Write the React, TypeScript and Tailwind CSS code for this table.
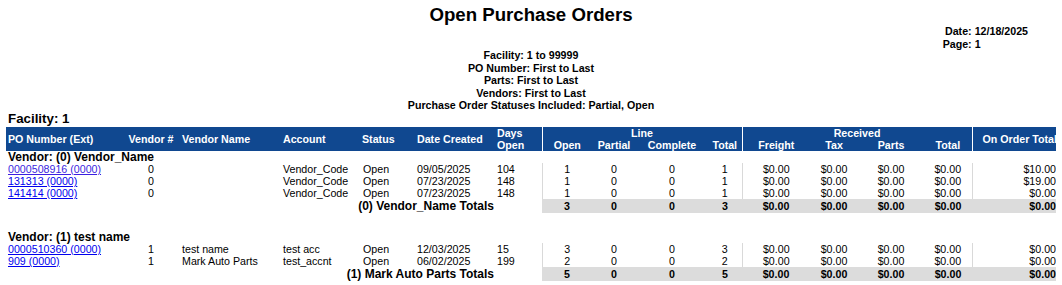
import React from "react";

type Row = {
  po: string;
  vendorNo: string;
  vendorName: string;
  account: string;
  status: string;
  date: string;
  days: string;
  open: string;
  partial: string;
  complete: string;
  total: string;
  freight: string;
  tax: string;
  parts: string;
  recTotal: string;
  onOrder: string;
  visited?: boolean;
};

type Group = {
  title: string;
  totalLabel: string;
  rows: Row[];
  totals: string[];
  onOrderTotal: string;
};

const groups: Group[] = [
  {
    title: "Vendor: (0) Vendor_Name",
    totalLabel: "(0) Vendor_Name Totals",
    rows: [
      { po: "0000508916 (0000)", vendorNo: "0", vendorName: "", account: "Vendor_Code", status: "Open", date: "09/05/2025", days: "104", open: "1", partial: "0", complete: "0", total: "1", freight: "$0.00", tax: "$0.00", parts: "$0.00", recTotal: "$0.00", onOrder: "$10.00", visited: true },
      { po: "131313 (0000)", vendorNo: "0", vendorName: "", account: "Vendor_Code", status: "Open", date: "07/23/2025", days: "148", open: "1", partial: "0", complete: "0", total: "1", freight: "$0.00", tax: "$0.00", parts: "$0.00", recTotal: "$0.00", onOrder: "$19.00" },
      { po: "141414 (0000)", vendorNo: "0", vendorName: "", account: "Vendor_Code", status: "Open", date: "07/23/2025", days: "148", open: "1", partial: "0", complete: "0", total: "1", freight: "$0.00", tax: "$0.00", parts: "$0.00", recTotal: "$0.00", onOrder: "$0.00" },
    ],
    totals: ["3", "0", "0", "3", "$0.00", "$0.00", "$0.00", "$0.00"],
    onOrderTotal: "$0.00",
  },
  {
    title: "Vendor: (1) test name",
    totalLabel: "(1) Mark Auto Parts Totals",
    rows: [
      { po: "0000510360 (0000)", vendorNo: "1", vendorName: "test name", account: "test acc", status: "Open", date: "12/03/2025", days: "15", open: "3", partial: "0", complete: "0", total: "3", freight: "$0.00", tax: "$0.00", parts: "$0.00", recTotal: "$0.00", onOrder: "$0.00" },
      { po: "909 (0000)", vendorNo: "1", vendorName: "Mark Auto Parts", account: "test_accnt", status: "Open", date: "06/02/2025", days: "199", open: "2", partial: "0", complete: "0", total: "2", freight: "$0.00", tax: "$0.00", parts: "$0.00", recTotal: "$0.00", onOrder: "$0.00" },
    ],
    totals: ["5", "0", "0", "5", "$0.00", "$0.00", "$0.00", "$0.00"],
    onOrderTotal: "$0.00",
  },
];

const filters = [
  "Facility: 1 to 99999",
  "PO Number: First to Last",
  "Parts: First to Last",
  "Vendors: First to Last",
  "Purchase Order Statuses Included: Partial, Open",
];

const widths = [116, 58, 101, 79, 55, 80, 47, 50, 44, 72, 34, 68, 48, 66, 48, 84];

const sep = "border-l border-[#d9d9d9]";

function GroupRows({ group }: { group: Group }) {
  return (
    <>
      <tr className="h-[12px]">
        <td colSpan={16} className="pl-[2px] text-[12px] font-bold leading-[12px]">
          {group.title}
        </td>
      </tr>
      {group.rows.map((r) => (
        <tr key={r.po} className="h-[12px] text-[10.67px] leading-[12px]">
          <td className="pl-[2px]">
            <a href="#" className={r.visited ? "text-[#3b1fe0] underline" : "text-[#0000ee] underline"}>
              {r.po}
            </a>
          </td>
          <td className="text-center">{r.vendorNo}</td>
          <td className="pl-[2px]">{r.vendorName}</td>
          <td className="pl-[2px]">{r.account}</td>
          <td className="pl-[3px]">{r.status}</td>
          <td className="pl-[2px]">{r.date}</td>
          <td className="pl-[2px]">{r.days}</td>
          <td className={`text-center ${sep}`}>{r.open}</td>
          <td className="text-center">{r.partial}</td>
          <td className="text-center">{r.complete}</td>
          <td className="text-center">{r.total}</td>
          <td className={`text-center ${sep}`}>{r.freight}</td>
          <td className="text-center">{r.tax}</td>
          <td className="text-center">{r.parts}</td>
          <td className="text-center">{r.recTotal}</td>
          <td className={`text-right ${sep}`}>{r.onOrder}</td>
        </tr>
      ))}
      <tr className="h-[14px] font-bold leading-[14px]">
        <td colSpan={6} className="pr-[1px] text-right text-[12px]">
          {group.totalLabel}
        </td>
        <td></td>
        {group.totals.map((t, i) => (
          <td key={i} className="bg-[#dcdcdc] text-center text-[10.67px]">
            {t}
          </td>
        ))}
        <td className="bg-[#dcdcdc] text-right text-[10.67px]">{group.onOrderTotal}</td>
      </tr>
    </>
  );
}

export default function App() {
  return (
    <div className="w-[1062px] bg-white text-black" style={{ fontFamily: '"Liberation Sans", Arial, sans-serif' }}>
      <h1 className="pt-[4px] text-center text-[18.67px] font-bold leading-[21px]">Open Purchase Orders</h1>

      <div className="grid grid-cols-[1fr_auto_1fr]">
        <div></div>
        <div className="pt-[24px] text-center text-[10.67px] font-bold leading-[12.5px]">
          {filters.map((f) => (
            <div key={f}>{f}</div>
          ))}
        </div>
        <div className="flex justify-end pr-[34px]">
          <div className="grid h-fit grid-cols-[auto_auto] gap-x-[3px] text-[10.67px] font-bold leading-[13px]">
            <span className="text-right">Date:</span>
            <span>12/18/2025</span>
            <span className="text-right">Page:</span>
            <span>1</span>
          </div>
        </div>
      </div>

      <div className="pb-[1.5px] pl-[8px] text-[13.33px] font-bold leading-[14px]">Facility: 1</div>

      <div className="ml-[6px] w-[1050px] overflow-hidden">
        <table className="w-[1050px] table-fixed border-collapse whitespace-nowrap">
          <colgroup>
            {widths.map((w, i) => (
              <col key={i} style={{ width: w }} />
            ))}
          </colgroup>
          <thead className="bg-[#104890] text-[10.67px] font-bold leading-[12px] text-white">
            <tr className="h-[12px]">
              <th rowSpan={2} className="pl-[2px] text-left font-bold">PO Number (Ext)</th>
              <th rowSpan={2} className="text-center font-bold">Vendor #</th>
              <th rowSpan={2} className="pl-[2px] text-left font-bold">Vendor Name</th>
              <th rowSpan={2} className="pl-[2px] text-left font-bold">Account</th>
              <th rowSpan={2} className="pl-[2px] text-left font-bold">Status</th>
              <th rowSpan={2} className="pl-[2px] text-left font-bold">Date Created</th>
              <th rowSpan={2} className="pl-[2px] text-left font-bold">
                Days
                <br />
                Open
              </th>
              <th colSpan={4} className="border-l border-white text-center font-bold">Line</th>
              <th colSpan={4} className="border-l border-white text-center font-bold">Received</th>
              <th rowSpan={2} className="overflow-hidden border-l border-white pl-[10px] text-left font-bold">
                On Order Total
              </th>
            </tr>
            <tr className="h-[12px]">
              <th className="border-l border-white text-center font-bold">Open</th>
              <th className="text-center font-bold">Partial</th>
              <th className="text-center font-bold">Complete</th>
              <th className="text-center font-bold">Total</th>
              <th className="border-l border-white text-center font-bold">Freight</th>
              <th className="text-center font-bold">Tax</th>
              <th className="text-center font-bold">Parts</th>
              <th className="text-center font-bold">Total</th>
            </tr>
          </thead>
          <tbody>
            <GroupRows group={groups[0]} />
            <tr className="h-[18px]">
              <td colSpan={16}></td>
            </tr>
            <GroupRows group={groups[1]} />
          </tbody>
        </table>
      </div>
    </div>
  );
}
